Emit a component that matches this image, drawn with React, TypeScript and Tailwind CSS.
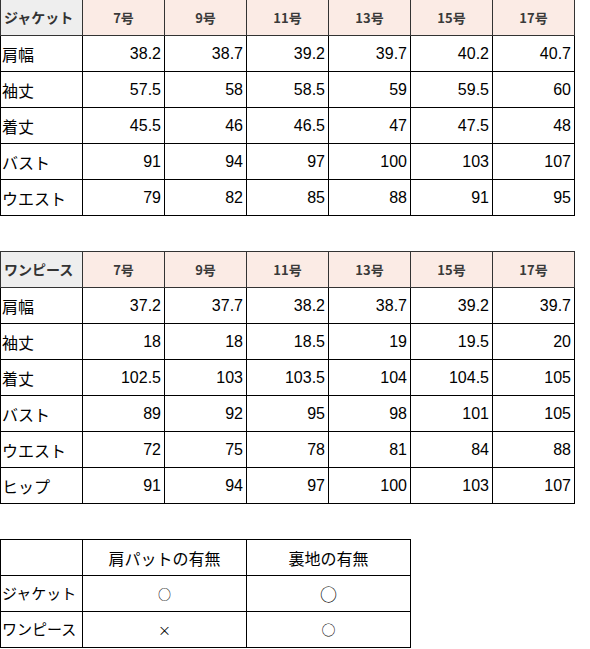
const sizes = ['7号', '9号', '11号', '13号', '15号', '17号']

const jacket: [string, string[]][] = [
  ['肩幅', ['38.2', '38.7', '39.2', '39.7', '40.2', '40.7']],
  ['袖丈', ['57.5', '58', '58.5', '59', '59.5', '60']],
  ['着丈', ['45.5', '46', '46.5', '47', '47.5', '48']],
  ['バスト', ['91', '94', '97', '100', '103', '107']],
  ['ウエスト', ['79', '82', '85', '88', '91', '95']],
]

const onepiece: [string, string[]][] = [
  ['肩幅', ['37.2', '37.7', '38.2', '38.7', '39.2', '39.7']],
  ['袖丈', ['18', '18', '18.5', '19', '19.5', '20']],
  ['着丈', ['102.5', '103', '103.5', '104', '104.5', '105']],
  ['バスト', ['89', '92', '95', '98', '101', '105']],
  ['ウエスト', ['72', '75', '78', '81', '84', '88']],
  ['ヒップ', ['91', '94', '97', '100', '103', '107']],
]

const jp = { fontFamily: '"Noto Sans CJK JP", sans-serif' }
const num = { fontFamily: '"Liberation Sans", "Noto Sans CJK JP", sans-serif' }

function SizeTable({ title, rows }: { title: string; rows: [string, string[]][] }) {
  return (
    <table className="table-fixed border-collapse w-[575px]">
      <thead>
        <tr className="h-[36px]">
          <th
            className="w-[82px] border border-[#333] bg-[#eeeeee] text-left pl-[3px] text-[14px] font-bold text-[#333] whitespace-nowrap"
            style={jp}
          >
            {title}
          </th>
          {sizes.map((s) => (
            <th
              key={s}
              className="w-[82px] border border-[#333] bg-[#fbebe5] text-center text-[13px] font-bold text-[#3a3a3a]"
              style={jp}
            >
              {s}
            </th>
          ))}
        </tr>
      </thead>
      <tbody>
        {rows.map(([label, vals]) => (
          <tr key={label} className="h-[36px]">
            <td className="border border-black pl-[1px] text-[16px] text-black whitespace-nowrap" style={jp}>
              {label}
            </td>
            {vals.map((v, i) => (
              <td key={i} className="border border-black text-right pr-[3px] text-[16px] text-black" style={num}>
                {v}
              </td>
            ))}
          </tr>
        ))}
      </tbody>
    </table>
  )
}

export default function App() {
  return (
    <div className="w-[590px] h-[649px] bg-white overflow-hidden" style={jp}>
      <div className="-mt-px">
        <SizeTable title="ジャケット" rows={jacket} />
      </div>
      <div className="mt-[35px]">
        <SizeTable title="ワンピース" rows={onepiece} />
      </div>
      <table className="mt-[35px] table-fixed border-collapse w-[411px] text-black">
        <tbody>
          <tr className="h-[36px]">
            <td className="w-[82px] border border-black"></td>
            <td className="w-[164px] border border-black text-center text-[16px]">肩パットの有無</td>
            <td className="w-[164px] border border-black text-center text-[16px]">裏地の有無</td>
          </tr>
          <tr className="h-[36px]">
            <td className="border border-black pl-[1px] text-[15px] whitespace-nowrap">ジャケット</td>
            <td className="border border-black text-center text-[13px]">○</td>
            <td className="border border-black text-center text-[17px]">○</td>
          </tr>
          <tr className="h-[36px]">
            <td className="border border-black pl-[1px] text-[15px] whitespace-nowrap">ワンピース</td>
            <td className="border border-black text-center text-[13px]">×</td>
            <td className="border border-black text-center text-[14px]">○</td>
          </tr>
        </tbody>
      </table>
    </div>
  )
}
